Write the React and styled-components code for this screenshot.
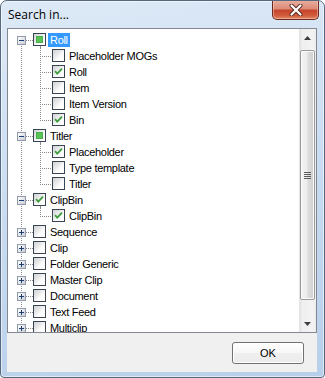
import React from "react";
import styled, { createGlobalStyle } from "styled-components";

const GlobalStyle = createGlobalStyle`
  html, body { margin: 0; padding: 0; background: #ffffff; }
  body { width: 325px; height: 378px; overflow: hidden; }
  * { box-sizing: border-box; }
`;

const Window = styled.div`
  width: 325px;
  height: 378px;
  display: flex;
  flex-direction: column;
  border: 1px solid #56687e;
  border-radius: 7px 7px 4px 4px;
  background: linear-gradient(170deg, #dde9f6 0%, #cfe0f3 35%, #c2d7ee 70%, #b8cfe9 100%);
  box-shadow: inset 0 0 0 1px rgba(255, 255, 255, 0.55);
  overflow: hidden;
`;

const TitleBar = styled.div`
  height: 27px;
  flex: none;
  display: flex;
  align-items: flex-start;
  padding-left: 7px;
`;

const Title = styled.div`
  font-family: "Open Sans", "Liberation Sans", sans-serif;
  font-size: 12px;
  line-height: 27px;
  color: #000;
`;

const CloseButton = styled.div`
  margin-left: auto;
  margin-right: 5px;
  margin-top: -1px;
  width: 47px;
  height: 20px;
  border: 1px solid #6b2a1d;
  border-top: none;
  border-radius: 0 0 5px 5px;
  background: linear-gradient(#eab1a3 0%, #dc8b76 45%, #c7452c 55%, #d0593c 80%, #e08a63 100%);
  box-shadow: inset 0 0 0 1px rgba(255, 220, 210, 0.45);
  display: flex;
  align-items: center;
  justify-content: center;
`;

const Client = styled.div`
  flex: 1;
  margin: 0 7px 5px 6px;
  background: #f0f0f0;
  display: flex;
  flex-direction: column;
`;

const TreeBox = styled.div`
  height: 305px;
  flex: none;
  border: 1px solid #828790;
  background: #ffffff;
  display: flex;
`;

const TreeArea = styled.div`
  flex: 1;
  padding-top: 3px;
  overflow: hidden;
  display: flex;
  flex-direction: column;
`;

const Row = styled.div`
  height: 16px;
  flex: none;
  display: flex;
  align-items: flex-start;
`;

const Gutter = styled.svg`
  flex: none;
  display: block;
`;

const CheckCell = styled.div`
  position: relative;
  width: 13px;
  height: 16px;
  flex: none;
  padding-top: 1px;
  &::after {
    content: "";
    display: ${(p) => (p.$open ? "block" : "none")};
    position: absolute;
    left: 7px;
    top: 14px;
    width: 0;
    height: 2px;
    border-left: 1px dotted #8a8a8a;
  }
`;

const Box = styled.div`
  width: 13px;
  height: 13px;
  border: 1px solid #3a4552;
  background: linear-gradient(135deg, #cfd1d3 0%, #eeeeee 45%, #fbfbfb 60%, #ffffff 100%);
  position: relative;
`;

const PartialMark = styled.div`
  position: absolute;
  left: 2px;
  top: 2px;
  width: 7px;
  height: 7px;
  background: #5ac35a;
  box-shadow: inset 0 0 0 1px #49b049;
`;

const Label = styled.div`
  margin-left: 2px;
  margin-top: 1px;
  padding: 0 2px;
  height: 14px;
  font-family: "Liberation Sans", Arial, sans-serif;
  font-size: 11px;
  letter-spacing: -0.3px;
  line-height: 14px;
  white-space: nowrap;
  color: ${(p) => (p.$selected ? "#ffffff" : "#000000")};
  background: ${(p) => (p.$selected ? "#3399ff" : "transparent")};
`;

const Scrollbar = styled.div`
  width: 17px;
  flex: none;
  display: flex;
  flex-direction: column;
  background: linear-gradient(to right, #e2e2e2 0%, #efefef 20%, #f3f3f3 80%, #ececec 100%);
`;

const ScrollButton = styled.div`
  height: 17px;
  flex: none;
  display: flex;
  align-items: center;
  justify-content: center;
`;

const ThumbTrack = styled.div`
  flex: 1;
  padding: 4px 1px 0 1px;
`;

const Thumb = styled.div`
  height: 250px;
  border: 1px solid #9a9a9a;
  border-radius: 2px;
  background: linear-gradient(to right, #f4f4f4 0%, #ececec 45%, #dcdcdc 55%, #cfcfcf 100%);
  box-shadow: inset 0 0 0 1px #fbfbfb;
  display: flex;
  align-items: center;
  justify-content: center;
`;

const Footer = styled.div`
  flex: 1;
  display: flex;
  justify-content: flex-end;
  align-items: flex-start;
  padding: 9px 13px 0 0;
`;

const OkButton = styled.div`
  width: 72px;
  height: 22px;
  border: 1px solid #707070;
  border-radius: 3px;
  background: linear-gradient(#fefefe 0%, #f7f7f7 50%, #efefef 51%, #ebebeb 100%);
  box-shadow: inset 0 0 0 1px #ffffff;
  font-family: "Liberation Sans", Arial, sans-serif;
  font-size: 11px;
  line-height: 20px;
  text-align: center;
  color: #000;
`;

const DOT = "#8a8a8a";

function VLine({ x, y1, y2 }) {
  const dots = [];
  for (let y = y1; y <= y2; y++) {
    if (y % 2 === 0) dots.push(<rect key={y} x={x} y={y} width="1" height="1" fill={DOT} />);
  }
  return <>{dots}</>;
}

function HLine({ y, x1, x2 }) {
  const dots = [];
  for (let x = x1; x <= x2; x++) {
    if (x % 2 === 0) dots.push(<rect key={x} x={x} y={y} width="1" height="1" fill={DOT} />);
  }
  return <>{dots}</>;
}

function Expander({ open }) {
  return (
    <>
      <rect x="9.5" y="4.5" width="8" height="8" fill="#fff" stroke="#8f9aa6" />
      <rect x="10" y="5" width="7" height="7" fill="url(#expg)" />
      <rect x="11" y="8" width="5" height="1" fill="#1f3f74" />
      {!open && <rect x="13" y="6" width="1" height="5" fill="#1f3f74" />}
    </>
  );
}

function RowGutter({ item }) {
  const cy = 8;
  if (item.level === 0) {
    return (
      <Gutter width="25" height="16" viewBox="0 0 25 16" shapeRendering="crispEdges">
        <defs>
          <linearGradient id="expg" x1="0" y1="0" x2="1" y2="1">
            <stop offset="0" stopColor="#ffffff" />
            <stop offset="1" stopColor="#c8ced6" />
          </linearGradient>
        </defs>
        <VLine x={13} y1={item.first ? cy : 0} y2={15} />
        <HLine y={cy} x1={18} x2={24} />
        <Expander open={item.open} />
      </Gutter>
    );
  }
  return (
    <Gutter width="44" height="16" viewBox="0 0 44 16" shapeRendering="crispEdges">
      <VLine x={13} y1={0} y2={15} />
      <VLine x={32} y1={0} y2={item.last ? cy : 15} />
      <HLine y={cy} x1={33} x2={43} />
    </Gutter>
  );
}

function CheckBox({ state, open }) {
  return (
    <CheckCell $open={open}>
      <Box>
        {state === "partial" && <PartialMark />}
        {state === "on" && (
          <svg width="11" height="11" viewBox="0 0 11 11" style={{ display: "block" }}>
            <path d="M2 5.2 L4.3 7.6 L9 2.6" fill="none" stroke="#3d9c3d" strokeWidth="1.8" />
          </svg>
        )}
      </Box>
    </CheckCell>
  );
}

const items = [
  { label: "Roll", level: 0, state: "partial", open: true, selected: true, first: true },
  { label: "Placeholder MOGs", level: 1, state: "off" },
  { label: "Roll", level: 1, state: "on" },
  { label: "Item", level: 1, state: "off" },
  { label: "Item Version", level: 1, state: "off" },
  { label: "Bin", level: 1, state: "on", last: true },
  { label: "Titler", level: 0, state: "partial", open: true },
  { label: "Placeholder", level: 1, state: "on" },
  { label: "Type template", level: 1, state: "off" },
  { label: "Titler", level: 1, state: "off", last: true },
  { label: "ClipBin", level: 0, state: "on", open: true },
  { label: "ClipBin", level: 1, state: "on", last: true },
  { label: "Sequence", level: 0, state: "off" },
  { label: "Clip", level: 0, state: "off" },
  { label: "Folder Generic", level: 0, state: "off" },
  { label: "Master Clip", level: 0, state: "off" },
  { label: "Document", level: 0, state: "off" },
  { label: "Text Feed", level: 0, state: "off" },
  { label: "Multiclip", level: 0, state: "off" },
];

export default function App() {
  return (
    <>
      <GlobalStyle />
      <Window>
        <TitleBar>
          <Title>Search in...</Title>
          <CloseButton>
            <svg width="14" height="12" viewBox="0 0 14 12">
              <path
                d="M2.5 1.5 L11.5 10.5 M11.5 1.5 L2.5 10.5"
                fill="none"
                stroke="#5a2a22"
                strokeWidth="4"
                strokeLinecap="round"
              />
              <path
                d="M2.5 1.5 L11.5 10.5 M11.5 1.5 L2.5 10.5"
                fill="none"
                stroke="#ffffff"
                strokeWidth="2.2"
                strokeLinecap="round"
              />
            </svg>
          </CloseButton>
        </TitleBar>
        <Client>
          <TreeBox>
            <TreeArea>
              {items.map((it, i) => (
                <Row key={i}>
                  <RowGutter item={it} />
                  <CheckBox state={it.state} open={it.open} />
                  <Label $selected={it.selected}>{it.label}</Label>
                </Row>
              ))}
            </TreeArea>
            <Scrollbar>
              <ScrollButton>
                <svg width="7" height="4" viewBox="0 0 7 4">
                  <path d="M0 4 L3.5 0 L7 4 Z" fill="#404040" />
                </svg>
              </ScrollButton>
              <ThumbTrack>
                <Thumb>
                  <svg width="7" height="7" viewBox="0 0 7 7" shapeRendering="crispEdges">
                    <rect x="0" y="0" width="7" height="1" fill="#5c5c5c" />
                    <rect x="0" y="2" width="7" height="1" fill="#5c5c5c" />
                    <rect x="0" y="4" width="7" height="1" fill="#5c5c5c" />
                    <rect x="0" y="6" width="7" height="1" fill="#5c5c5c" />
                  </svg>
                </Thumb>
              </ThumbTrack>
              <ScrollButton>
                <svg width="7" height="4" viewBox="0 0 7 4">
                  <path d="M0 0 L3.5 4 L7 0 Z" fill="#404040" />
                </svg>
              </ScrollButton>
            </Scrollbar>
          </TreeBox>
          <Footer>
            <OkButton>OK</OkButton>
          </Footer>
        </Client>
      </Window>
    </>
  );
}
